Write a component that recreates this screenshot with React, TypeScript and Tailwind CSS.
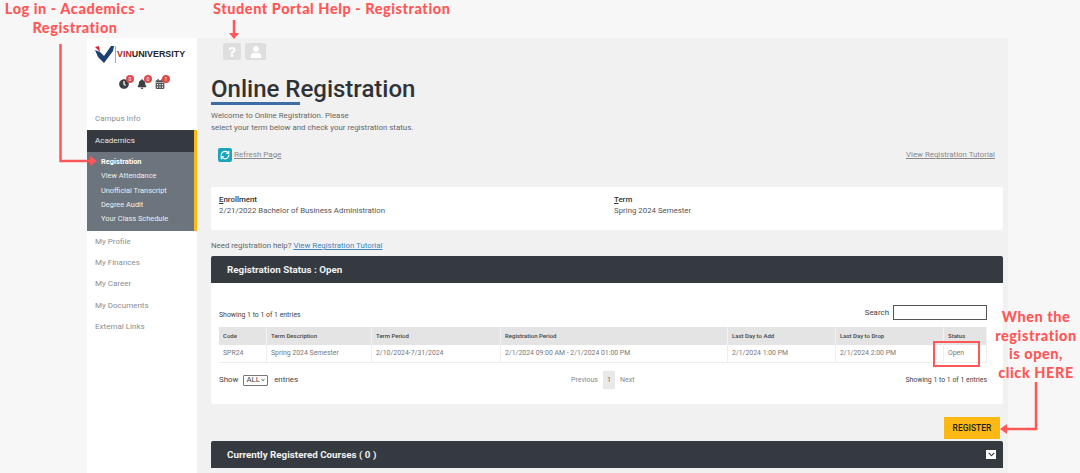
import { Fragment } from "react";
import { FaQuestion, FaUser, FaBell, FaCalendarAlt, FaClock, FaChevronDown } from "react-icons/fa";
import { LuRefreshCw } from "react-icons/lu";

const sub = ["Registration", "View Attendance", "Unofficial Transcript", "Degree Audit", "Your Class Schedule"];
const more = ["My Profile", "My Finances", "My Career", "My Documents", "External Links"];
const cols: [string, string, string][] = [
  ["w-[48px]", "Code", "SPR24"],
  ["w-[105px]", "Term Description", "Spring 2024 Semester"],
  ["w-[129px]", "Term Period", "2/10/2024-7/31/2024"],
  ["w-[227px]", "Registration Period", "2/1/2024 09:00 AM - 2/1/2024 01:00 PM"],
  ["w-[108px]", "Last Day to Add", "2/1/2024 1:00 PM"],
  ["w-[108px]", "Last Day to Drop", "2/1/2024 2:00 PM"],
  ["w-[43px]", "Status", "Open"],
];

function Badge({ n }: { n: string }) {
  return (
    <span className="absolute -right-[5px] -top-[4px] flex h-[8px] w-[8px] items-center justify-center rounded-full bg-[#dc4a4a] text-[5px] leading-none text-white">
      {n}
    </span>
  );
}

const note = "absolute font-['Lato','Liberation_Sans',sans-serif] text-[14.5px] font-black leading-[18.5px] tracking-[0.55px] text-[#ff5757]";

export default function App() {
  return (
    <div className="relative flex h-[473px] w-[1080px] overflow-hidden bg-[#f7f7f7] pl-[87px] pt-[38px] font-['Roboto',sans-serif] text-[#5f6368]">
      <aside className="w-[110px] shrink-0 bg-white">
        <div className="flex h-[28px] items-center pl-[8px] pt-[5px]">
          <svg width="19" height="17" viewBox="0 0 19 17" className="shrink-0">
            <path d="M0 1 L4 0 L5 6 Z" fill="#d8262e" />
            <path d="M0 4 L5 6 L9 10 L16 0 L19 0 L18 5 L9 17 L3 11 Z" fill="#1d3f72" />
          </svg>
          <span className="ml-[1px] h-[17px] w-[1px] bg-[#aaaaaa]" />
          <span className="ml-[1px] font-['Liberation_Sans',sans-serif] text-[8.9px] font-bold leading-none text-[#24242c]">
            <span className="text-[#b22a30]">VIN</span>UNIVERSITY
          </span>
        </div>
        <div className="flex items-center justify-center gap-[8px] pt-[13px] text-[#3c3f43]">
          <span className="relative"><FaClock size={10} /><Badge n="0" /></span>
          <span className="relative"><FaBell size={10} /><Badge n="0" /></span>
          <span className="relative"><FaCalendarAlt size={10} className="text-[#555]" /><Badge n="1" /></span>
        </div>
        <div className="pl-[8px] pt-[24px] text-[8px] leading-[12px] text-[#8a8f94]">Campus Info</div>
        <div className="mt-[5px] flex h-[22px] items-center border-r-[3px] border-[#fdb913] bg-[#343a40] pl-[8px] text-[8px] text-[#e6e7e8]">Academics</div>
        <ul className="h-[79px] border-r-[3px] border-[#fdb913] bg-[#6c757d] pl-[14px] pt-[3px]">
          {sub.map((s, i) => (
            <li key={s} className={`h-[14.3px] text-[7.4px] leading-[14.3px] ${i === 0 ? "font-bold text-white" : "font-normal text-[#eceeef]"}`}>{s}</li>
          ))}
        </ul>
        <ul className="pl-[8px]">
          {more.map((s) => (
            <li key={s} className="flex h-[21.4px] items-center text-[8px] text-[#8a8f94]">{s}</li>
          ))}
        </ul>
      </aside>

      <main className="w-[811px] shrink-0 bg-[#f1f1f1] pl-[14px] pr-[5px]">
        <div className="flex gap-[4px] pl-[12px] pt-[5px]">
          <span className="flex h-[17px] w-[18px] items-center justify-center rounded-[2px] bg-[#dedede] text-white"><FaQuestion size={10} /></span>
          <span className="flex h-[17px] w-[21px] items-center justify-center rounded-[2px] bg-[#dedede] text-white"><FaUser size={12} /></span>
        </div>
        <h1 className="pt-[15px] text-[24px] font-medium leading-[28px] text-[#2f3338]">Online Registration</h1>
        <div className="-mt-[1px] h-[3px] w-[89px] bg-[#3a6ea5]" />
        <p className="pt-[5px] text-[7.9px] leading-[12px] text-[#666]">
          Welcome to Online Registration. Please<br />select your term below and check your registration status.
        </p>
        <div className="flex items-center justify-between pl-[7px] pr-[8px] pt-[14px]">
          <div className="flex items-center gap-[2px]">
            <span className="flex h-[14px] w-[14px] items-center justify-center rounded-[2px] bg-[#1ba5bd] text-white"><LuRefreshCw size={10} strokeWidth={3} /></span>
            <a className="text-[8px] text-[#888] underline">Refresh Page</a>
          </div>
          <a className="text-[7.85px] text-[#888] underline">View Registration Tutorial</a>
        </div>

        <section className="mt-[25px] flex h-[43px] rounded-[2px] bg-white pl-[8px] pt-[7px] text-[7.85px] leading-[11px] text-[#555]">
          <div className="w-[395px]"><b className="font-medium text-[#333]"><u>E</u>nrollment</b><br />2/21/2022 Bachelor of Business Administration</div>
          <div><b className="font-medium text-[#333]"><u>T</u>erm</b><br />Spring 2024 Semester</div>
        </section>

        <p className="pt-[10px] text-[7.85px] leading-[11px] text-[#666]">
          Need registration help? <a className="text-[#3d87bf] underline">View Registration Tutorial</a>
        </p>

        <section className="mt-[5px] rounded-[2px] bg-white">
          <h2 className="flex h-[27px] items-center rounded-t-[2px] bg-[#343a40] pl-[16px] pt-[2px] text-[9.8px] font-bold text-[#f1f1f1]">Registration Status : Open</h2>
          <div className="flex h-[44px] items-end justify-between pb-[7px] pl-[8px] pr-[16px]">
            <span className="text-[6.9px] leading-[10px] text-[#444]">Showing 1 to 1 of 1 entries</span>
            <span className="flex items-center gap-[4px] text-[7.9px] text-[#444]">Search<span className="h-[15px] w-[94px] border border-[#555] bg-white" /></span>
          </div>
          <div className="ml-[8px] mr-[16px] border-b border-[#eeeeee]">
            <div className="flex h-[18px] bg-[#e4e4e4] text-[6px] font-medium leading-[18px] text-[#444]">
              {cols.map(([w, h]) => <div key={h} className={`${w} border-r border-[#f3f3f3] pl-[4px]`}>{h}</div>)}
            </div>
            <div className="flex h-[17px] text-[6.9px] leading-[17px] text-[#777]">
              {cols.map(([w, h, v]) => <div key={h} className={`${w} border-r border-[#eeeeee] pl-[4px]`}>{v}</div>)}
            </div>
          </div>
          <div className="flex h-[41px] pl-[8px] pr-[16px] pt-[10px] text-[7.9px] text-[#444]">
            <div className="flex h-[14px] w-[300px] items-center">
              Show
              <span className="ml-[5px] mr-[6px] flex h-[11px] items-center gap-[1px] rounded-[1px] border border-[#777] px-[2px]">ALL<FaChevronDown size={4} /></span>
              entries
            </div>
            <div className="-mt-[2px] ml-[52px] flex h-[18px] items-center gap-[5px] text-[7px] text-[#888]">
              Previous
              <span className="flex h-[18px] w-[12px] items-center justify-center border border-[#e8e8e8] bg-[#e9e9e9] text-[#666]">1</span>
              Next
            </div>
            <div className="ml-auto flex h-[14px] items-center text-[6.9px]">Showing 1 to 1 of 1 entries</div>
          </div>
        </section>

        <div className="flex justify-end pr-[3px] pt-[13px]">
          <button className="flex h-[22px] w-[56px] items-center justify-center bg-[#fdb913] text-[8.5px] font-medium text-[#222]">REGISTER</button>
        </div>
        <section className="mt-[2px] flex h-[27px] items-center justify-between rounded-t-[2px] bg-[#343a40] pl-[16px] pr-[7px] pt-[2px] text-[9.8px] font-bold text-[#f1f1f1]">
          Currently Registered Courses ( 0 )
          <span className="-mt-[2px] flex h-[9px] w-[10px] items-center justify-center bg-white text-[#343a40]"><FaChevronDown size={7} /></span>
        </section>
      </main>

      <div className={`${note} left-[0px] top-0 w-[150px] text-center`}>Log in - Academics -<br />Registration</div>
      <div className={`${note} left-[213px] top-0 whitespace-nowrap`}>Student Portal Help - Registration</div>
      <div className={`${note} left-[986px] top-[308px] w-[100px] text-center`}>
        {["When the", "registration", "is open,", "click HERE"].map((l) => <Fragment key={l}>{l}<br /></Fragment>)}
      </div>
      <div className="absolute left-[933px] top-[341px] h-[26px] w-[47px] border-[2.5px] border-[#ff5757]" />
      <svg className="absolute left-0 top-0" width="1080" height="473" viewBox="0 0 1080 473" fill="none">
        <path d="M60.5 44V161H91" stroke="#ff5757" strokeWidth="2.5" />
        <path d="M90 156L97 161L90 166Z" fill="#ff5757" />
        <path d="M234 20V34" stroke="#ff5757" strokeWidth="2.5" />
        <path d="M229 33L234 39L239 33Z" fill="#ff5757" />
        <path d="M1036 382V429H1006" stroke="#ff5757" strokeWidth="2.5" />
        <path d="M1007 424L1000 429L1007 434Z" fill="#ff5757" />
      </svg>
    </div>
  );
}
